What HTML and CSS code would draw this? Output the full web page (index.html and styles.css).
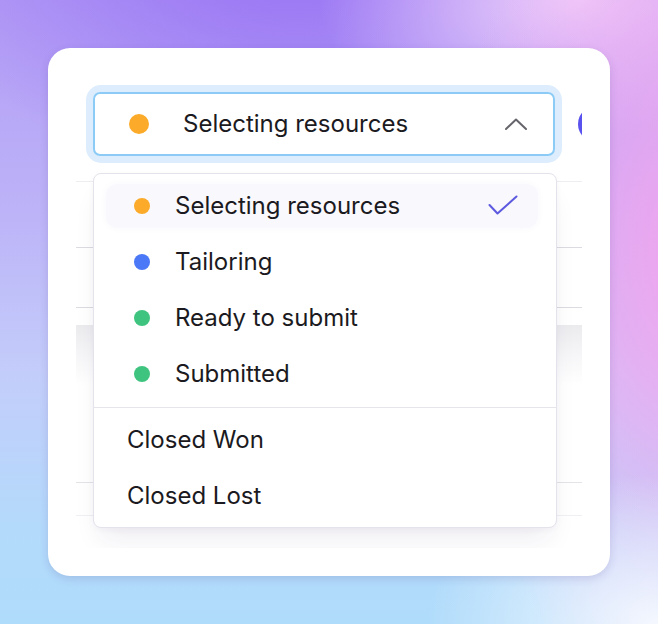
FILE: index.html
```html
<!DOCTYPE html>
<html lang="en">
<head>
<meta charset="utf-8">
<title>Status dropdown</title>
<link rel="stylesheet" href="styles.css">
</head>
<body>
<div class="stage">
  <div class="card">
    <div class="content">
      <div class="toolbar">
        <div class="trigger-ring">
          <button class="trigger" type="button">
            <span class="dot dot-lg orange"></span>
            <span class="trigger-label">Selecting resources</span>
            <svg class="chevron" width="22" height="12" viewBox="0 0 22 12"><polyline points="1,11 11,1.5 21,11" fill="none" stroke="#66656b" stroke-width="2" stroke-linecap="round" stroke-linejoin="round"/></svg>
          </button>
        </div>
        <span class="avatar"></span>
      </div>
      <div class="table">
        <div class="row row-head"></div>
        <div class="row row-a"></div>
        <div class="row row-b"></div>
        <div class="shade"></div>
        <div class="row row-c"></div>
        <div class="row row-d"></div>
      </div>

      <div class="menu">
        <div class="group">
          <div class="item selected">
            <span class="dot orange"></span>
            <span class="label">Selecting resources</span>
            <svg class="check" width="30" height="22" viewBox="0 0 30 22"><polyline points="1.5,10 9.5,18.5 28.5,1.5" fill="none" stroke="#5d5ae0" stroke-width="2" stroke-linecap="round" stroke-linejoin="round"/></svg>
          </div>
          <div class="item">
            <span class="dot blue"></span>
            <span class="label">Tailoring</span>
          </div>
          <div class="item">
            <span class="dot green"></span>
            <span class="label">Ready to submit</span>
          </div>
          <div class="item">
            <span class="dot green"></span>
            <span class="label">Submitted</span>
          </div>
        </div>
        <div class="group group-closed">
          <div class="item plain"><span class="label">Closed Won</span></div>
          <div class="item plain"><span class="label">Closed Lost</span></div>
        </div>
      </div>
    </div>
  </div>
</div>
</body>
</html>
```

FILE: styles.css
```css
* { box-sizing: border-box; }

html, body {
  margin: 0;
  padding: 0;
}

body {
  width: 658px;
  height: 624px;
  overflow: hidden;
  font-family: Inter, "Liberation Sans", Arial, sans-serif;
  color: #1b1a21;
  background:
    radial-gradient(ellipse 230px 150px at 100% 100%, rgba(248, 250, 255, 0.95), rgba(248, 250, 255, 0) 100%),
    radial-gradient(ellipse 250px 460px at 106% 42%, rgba(243, 164, 238, 1), rgba(243, 164, 238, 0) 100%),
    radial-gradient(ellipse 260px 140px at 88% 0%, rgba(238, 208, 251, 1), rgba(238, 208, 251, 0) 100%),
    radial-gradient(ellipse 380px 260px at 45% -10%, rgba(150, 112, 244, 1), rgba(150, 112, 244, 0) 100%),
    linear-gradient(180deg, #b39cf5 0%, #bdb4f8 35%, #c3cdfa 60%, #b3dafb 85%, #b0dcfb 100%);
}

.stage {
  padding: 48px;
}

.card {
  width: 562px;
  height: 528px;
  background: #fff;
  border-radius: 22px;
  padding: 28px;
  box-shadow: 0 3px 8px rgba(70, 50, 130, 0.16);
}

.content {
  position: relative;
  height: 472px;
  overflow: hidden;
}

.toolbar {
  display: flex;
  align-items: center;
  gap: 23px;
  padding: 16px 0 0 17px;
}

.trigger-ring {
  border-radius: 8px;
  box-shadow: 0 0 0 7px #ddedfd;
}

.trigger {
  display: flex;
  align-items: center;
  width: 462px;
  height: 64px;
  margin: 0;
  padding: 0 26px 0 34px;
  border: 2px solid #8ccbf6;
  border-radius: 7px;
  background: #fff;
  font: inherit;
  color: inherit;
  text-align: left;
}

.trigger-label {
  flex: 1;
  margin-left: 34px;
  font-size: 24px;
  line-height: 30px;
}

.chevron {
  display: block;
  flex: none;
}

.avatar {
  flex: none;
  width: 36px;
  height: 36px;
  border-radius: 50%;
  background: #5a52ef;
}

.dot {
  flex: none;
  width: 16px;
  height: 16px;
  border-radius: 50%;
}

.dot-lg {
  width: 20px;
  height: 20px;
}

.orange { background: #fbab29; }
.blue { background: #4a78f6; }
.green { background: #3ec47f; }

.table {
  margin-top: 25px;
}

.row {
  border-top: 1px solid #dcdbe1;
}

.row-head {
  height: 66px;
  border-top-color: #eeedf2;
}

.row-a {
  height: 60px;
}

.row-b {
  height: 18px;
}

.shade {
  height: 157px;
  background: linear-gradient(180deg, #ebebee 0px, #f6f6f8 30px, #ffffff 60px);
}

.row-c {
  height: 33px;
  border-top-color: #e4e3e8;
}

.row-d {
  height: 30px;
  border-top-color: #f0eff3;
}

.menu {
  position: absolute;
  left: 17px;
  top: 97px;
  width: 464px;
  height: 355px;
  background: #fff;
  border: 1px solid #e4e2ea;
  border-radius: 8px;
  box-shadow:
    0 18px 26px -8px rgba(50, 30, 90, 0.09),
    0 2px 6px rgba(50, 30, 90, 0.04);
}

.group {
  display: flex;
  flex-direction: column;
  gap: 12px;
  padding: 10px 0 11px;
}

.group-closed {
  border-top: 1px solid #e7e5ec;
  padding: 10px 0 9px;
}

.item {
  display: flex;
  align-items: center;
  height: 44px;
  margin: 0 18px 0 12px;
  padding: 0 20px 0 28px;
  border-radius: 12px;
  font-size: 24px;
}

.item .label {
  flex: 1;
  margin-left: 25px;
  line-height: 30px;
}

.item.plain {
  padding-left: 21px;
}

.item.plain .label {
  margin-left: 0;
}

.item.selected {
  background: #f9f8fc;
  box-shadow: 0 0 6px 1px #f9f8fc;
}

.check {
  display: block;
  flex: none;
}
```
